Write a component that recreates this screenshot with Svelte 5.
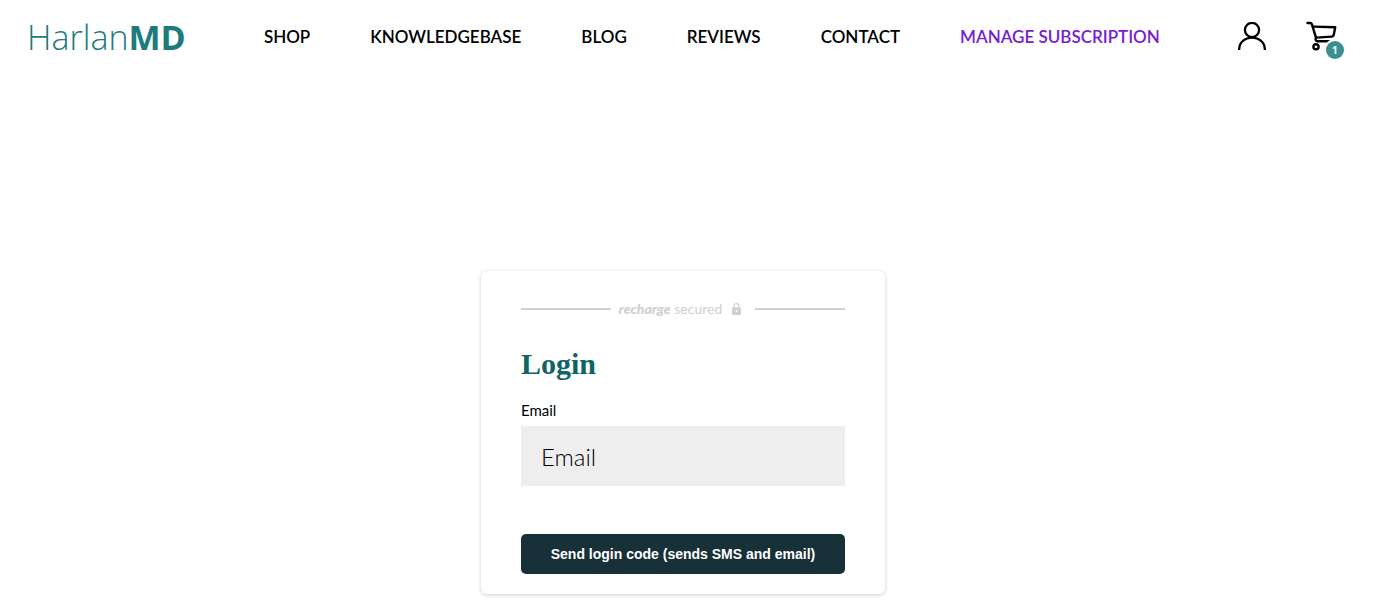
<script>
  const links = [
    { label: 'SHOP', href: '#shop' },
    { label: 'KNOWLEDGEBASE', href: '#knowledgebase' },
    { label: 'BLOG', href: '#blog' },
    { label: 'REVIEWS', href: '#reviews' },
    { label: 'CONTACT', href: '#contact' },
    { label: 'MANAGE SUBSCRIPTION', href: '#subscription', accent: true },
  ]

  let email = $state('')
  let cartCount = $state(1)

  function sendCode(event) {
    event.preventDefault()
  }
</script>

<header>
  <a class="logo" href="#home">Harlan<b>MD</b></a>

  <nav>
    {#each links as link}
      <a href={link.href} class:accent={link.accent}>{link.label}</a>
    {/each}
  </nav>

  <div class="actions">
    <a href="#account" aria-label="Account">
      <svg width="28" height="28" viewBox="0 0 28 28" fill="none" stroke="#000" stroke-width="2.3">
        <circle cx="14" cy="8" r="7.1" />
        <path d="M1.2 28v-1a12.8 11.4 0 0 1 25.6 0v1" />
      </svg>
    </a>
    <a class="cart" href="#cart" aria-label="Cart">
      <svg width="32" height="30" viewBox="0 0 32 30" fill="none" stroke="#000" stroke-width="2.4" stroke-linecap="round" stroke-linejoin="round">
        <path d="M1.5 2h2.7q1.3 0 1.7 1.3L10 16.6" />
        <path d="M7.3 5.6l21.9.6-1.4 7.6q-.3 1.7-2.1 1.8L10 16.6" />
        <path d="M10 16.6q-1.2 3.2 1.4 3.6h15" />
        <circle cx="10" cy="25.8" r="2.6" />
        <circle cx="24" cy="25.8" r="2.6" />
      </svg>
      <span class="badge">{cartCount}</span>
    </a>
  </div>
</header>

<main>
  <form class="card" onsubmit={sendCode}>
    <div class="secured">
      <span class="brand"><b>recharge</b> secured</span>
      <svg width="9" height="12" viewBox="0 0 9 12">
        <path d="M2 5V3.2a2.5 2.5 0 0 1 5 0V5" fill="none" stroke="#cfcfcf" stroke-width="1.2" />
        <rect y="4.4" width="9" height="7.6" rx="1.3" fill="#cfcfcf" />
        <circle cx="4.5" cy="8" r="1" fill="#fff" />
      </svg>
    </div>

    <h1>Login</h1>

    <label for="email">Email</label>
    <input id="email" type="email" placeholder="Email" bind:value={email} />

    <button type="submit">Send login code (sends SMS and email)</button>
  </form>
</main>

<style>
  :global(body) {
    margin: 0;
    background: #fff;
    font-family: Lato, sans-serif;
  }

  header {
    display: flex;
    align-items: center;
    justify-content: space-between;
    height: 72px;
    padding: 0 36px 0 27px;
  }

  a {
    color: #000;
    text-decoration: none;
  }

  .logo {
    padding-top: 2px;
    color: #1c7c7d;
    font-family: 'Open Sans', sans-serif;
    font-size: 34px;
    font-weight: 300;
    line-height: 48px;
  }

  .logo b {
    font-weight: 700;
  }

  nav {
    display: flex;
    gap: 60px;
    padding-top: 2px;
    font-size: 17px;
    font-weight: 600;
    line-height: 24px;
    white-space: nowrap;
  }

  nav .accent {
    color: #7620d0;
  }

  .actions {
    display: flex;
    align-items: center;
    gap: 40px;
  }

  .actions a {
    display: block;
  }

  .actions svg {
    display: block;
  }

  .cart {
    position: relative;
    padding-right: 6px;
  }

  .badge {
    position: absolute;
    right: 0;
    bottom: -8px;
    width: 18px;
    height: 18px;
    border-radius: 50%;
    box-shadow: 0 0 0 2px #fff;
    background: #388f8f;
    color: #fff;
    font-family: 'Noto Sans', sans-serif;
    font-size: 10px;
    font-weight: 700;
    line-height: 18px;
    text-align: center;
  }

  main {
    display: flex;
    justify-content: center;
    padding: 199px 14px 11px 0;
  }

  .card {
    box-sizing: border-box;
    width: 100%;
    max-width: 404px;
    padding: 28px 40px 20px;
    border-radius: 6px;
    box-shadow: 0 1px 4px rgba(0, 0, 0, 0.2);
  }

  .secured {
    display: flex;
    align-items: center;
    height: 20px;
    color: #cfcfcf;
    font-size: 14px;
    line-height: 20px;
  }

  .secured::before,
  .secured::after {
    content: '';
    flex: 1;
    height: 2px;
    background: #cfcfcf;
  }

  .brand {
    margin: 0 10px 0 8px;
  }

  .brand b {
    font-style: italic;
    font-weight: 900;
  }

  .secured svg {
    margin-right: 14px;
  }

  h1 {
    margin: 25px 0 16px;
    color: #0f6466;
    font-family: 'Liberation Serif', serif;
    font-size: 30px;
    font-weight: 700;
    line-height: 40px;
  }

  label {
    display: block;
    margin-bottom: 6px;
    font-size: 15px;
    line-height: 20px;
  }

  input {
    box-sizing: border-box;
    display: block;
    width: 100%;
    height: 60px;
    padding: 0 20px;
    border: none;
    border-radius: 0;
    background: #eee;
    color: #000;
    font-family: Lato, sans-serif;
    font-size: 24px;
    font-weight: 300;
  }

  input::placeholder {
    color: #000;
    opacity: 1;
  }

  button {
    display: block;
    width: 100%;
    height: 40px;
    margin-top: 48px;
    border: none;
    border-radius: 5px;
    background: #183038;
    color: #fff;
    font-family: 'Liberation Sans', sans-serif;
    font-size: 14px;
    font-weight: 700;
    cursor: pointer;
  }
</style>
